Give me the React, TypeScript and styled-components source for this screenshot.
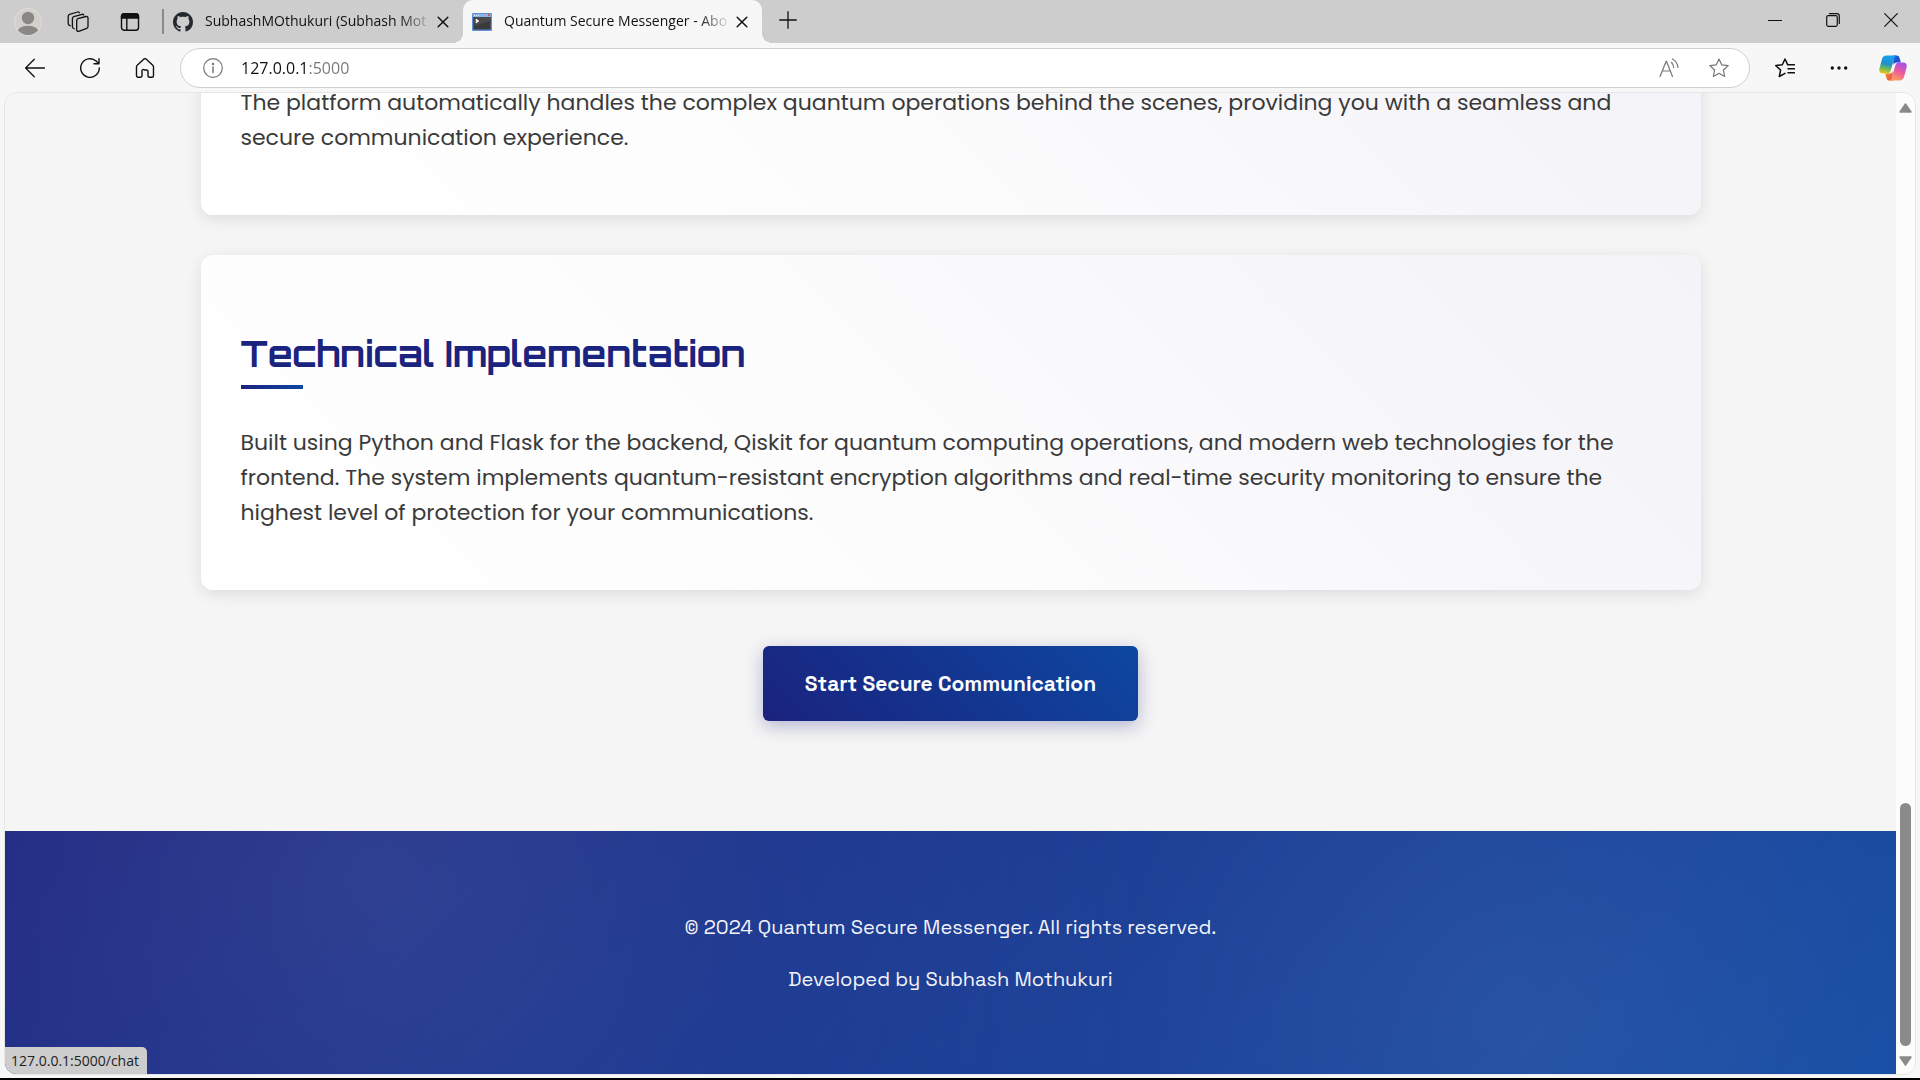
import React from "react";
import styled, { createGlobalStyle, css } from "styled-components";

const uiFont = css`font-family: "Segoe UI", "Open Sans", "Noto Sans", sans-serif;`;
const bodyFont = `"Poppins", "Inter", "Open Sans", sans-serif`;
const headFont = `"Orbitron", "DejaVu Sans", sans-serif`;
const labelFont = `"Space Grotesk", "Inter", "Open Sans", sans-serif`;

const GlobalStyle = createGlobalStyle`
  *, *::before, *::after { box-sizing: border-box; }
  body { margin: 0; background: #f7f7f7; }
  button, input { font: inherit; color: inherit; border: 0; background: none; padding: 0; margin: 0; }
  a { color: inherit; text-decoration: none; }
  svg { display: block; }
`;

const Window = styled.div`
  height: 100vh;
  display: flex;
  flex-direction: column;
  background: #f7f7f7;
  border-bottom: 2px solid #000;
  overflow: hidden;
  ${uiFont}
`;

const TabStrip = styled.header`
  flex: none;
  height: 43px;
  display: flex;
  align-items: stretch;
  background: #cdcdcd;
  color: #111;
`;

const StripTools = styled.div`
  display: flex;
  align-items: center;
  padding: 0 4px 0 2px;
`;

const IconButton = styled.button<{ $w: number; $tone?: string }>`
  flex: none;
  width: ${(p) => p.$w}px;
  height: 40px;
  display: flex;
  align-items: center;
  justify-content: center;
  color: ${(p) => p.$tone ?? "#111"};
`;

const Divider = styled.span`
  align-self: center;
  width: 2px;
  height: 25px;
  background: #8a8a8a;
`;

const Tab = styled.div<{ $active?: boolean }>`
  position: relative;
  width: 299px;
  display: flex;
  align-items: center;
  padding: 0 9px;
  border-radius: 10px 10px 0 0;
  background: ${(p) => (p.$active ? "#f7f7f7" : "transparent")};
  ${(p) =>
    p.$active &&
    css`
      &::before,
      &::after {
        content: "";
        position: absolute;
        bottom: 0;
        width: 10px;
        height: 10px;
      }
      &::before {
        right: 100%;
        background: radial-gradient(circle at 0 0, transparent 10px, #f7f7f7 10px);
      }
      &::after {
        left: 100%;
        background: radial-gradient(circle at 100% 0, transparent 10px, #f7f7f7 10px);
      }
    `}
`;

const TabLabel = styled.button`
  flex: 1;
  min-width: 0;
  height: 34px;
  display: flex;
  align-items: center;
  gap: 12px;
  text-align: left;
  font-size: 14px;
  line-height: 20px;
`;

const TabText = styled.span`
  flex: 1;
  min-width: 0;
  padding-bottom: 2px;
  overflow: hidden;
  white-space: nowrap;
  mask-image: linear-gradient(to left, transparent 0, #000 32px);
`;

const WindowButtons = styled.div`
  margin-left: auto;
  display: flex;
`;

const Toolbar = styled.nav`
  flex: none;
  height: 49px;
  display: flex;
  align-items: center;
  padding-left: 7px;
`;

const AddressBar = styled.form`
  flex: 1;
  min-width: 0;
  height: 40px;
  margin: 0 8px;
  padding: 0 5px 0 12px;
  display: flex;
  align-items: center;
  border: 1px solid #cfcfcf;
  border-radius: 20px;
  background: #fff;
`;

const AddressInput = styled.input`
  flex: 1;
  min-width: 0;
  margin-left: 8px;
  height: 30px;
  font-size: 16px;
  outline: none;
  color: transparent;
  background: linear-gradient(to right, #111 68px, #767676 68px);
  background-clip: text;
`;

const Viewport = styled.div`
  position: relative;
  flex: 1;
  min-height: 0;
  margin: 0 4px 3px;
  display: flex;
  border: 1px solid #e6e6e6;
  border-radius: 13px;
  overflow: hidden;
  background: #f5f5f5;
`;

const Page = styled.div`
  flex: 1;
  min-width: 0;
  display: flex;
  flex-direction: column;
  justify-content: flex-end;
  overflow: hidden;
`;

const Main = styled.main`
  flex: none;
  width: calc(100% - 60px);
  max-width: 1500px;
  margin: 0 auto;
  padding-bottom: 110px;
  display: flex;
  flex-direction: column;
  align-items: center;
`;

const Card = styled.section`
  width: 100%;
  padding: 40px;
  margin-bottom: 40px;
  border-radius: 12px;
  background: linear-gradient(45deg, #fff 0%, #fcfcfd 45%, #f6f6fa 80%, #f3f3f8 100%);
  box-shadow: 0 4px 15px rgba(0, 0, 0, 0.1);
`;

const Title = styled.h2`
  margin: 35px 0 36px;
  font-family: ${headFont};
  font-size: 36px;
  line-height: 48px;
  font-weight: 700;
  color: #1a237e;
  &::after {
    content: "";
    display: block;
    width: 62px;
    height: 4px;
    margin-top: 7px;
    background: linear-gradient(45deg, #1a237e, #0d47a1);
  }
`;

const Paragraph = styled.p`
  margin: 0 0 20px;
  font-family: ${bodyFont};
  font-size: 22px;
  line-height: 35px;
  color: #3a3a3a;
`;

const StartLink = styled.a`
  margin-top: 16px;
  padding: 20px 42px;
  border-radius: 6px;
  font-family: ${labelFont};
  font-size: 21px;
  line-height: 35px;
  font-weight: 600;
  color: #fff;
  background: linear-gradient(45deg, #1a237e, #0d47a1);
  box-shadow: 0 5px 18px rgba(26, 35, 126, 0.3);
`;

const Footer = styled.footer`
  flex: none;
  padding: 79px 40px 78px;
  display: flex;
  flex-direction: column;
  gap: 18px;
  text-align: center;
  font-family: ${labelFont};
  font-size: 20px;
  line-height: 34px;
  color: #f3f4fa;
  background:
    radial-gradient(circle at 20% 20%, rgba(255, 255, 255, 0.1), transparent 50%),
    radial-gradient(circle at 80% 80%, rgba(255, 255, 255, 0.1), transparent 50%),
    linear-gradient(135deg, #1a237e, #0d47a1);
  p { margin: 0; }
`;

const ScrollTrack = styled.div`
  flex: none;
  width: 19px;
  padding: 10px 0 8px;
  display: flex;
  flex-direction: column;
  align-items: center;
  justify-content: space-between;
  background: #fcfcfc;
`;

const ScrollEnd = styled.div`
  display: flex;
  flex-direction: column;
  align-items: center;
  gap: 10px;
`;

const Thumb = styled.div`
  width: 11px;
  height: 243px;
  border-radius: 6px;
  background: #8a8a8a;
`;

const StatusBubble = styled.div`
  position: absolute;
  left: 0;
  bottom: 0;
  padding: 4px 8px 3px 6px;
  border-top-right-radius: 5px;
  font-size: 14px;
  line-height: 20px;
  background: #cdcdcd;
  color: #222;
`;

type IconProps = { size?: number; sw?: number; children: React.ReactNode; box?: number };
const Icon = ({ size = 20, box = 20, sw = 1.2, children }: IconProps) => (
  <svg width={size} height={size} viewBox={`0 0 ${box} ${box}`} fill="none" stroke="currentColor" strokeWidth={sw} strokeLinecap="round" strokeLinejoin="round" aria-hidden="true">
    {children}
  </svg>
);

const Close = () => <Icon size={12} box={12} sw={1.5}><path d="M1.2 1.2l9.6 9.6M10.8 1.2l-9.6 9.6" /></Icon>;

const Avatar = () => (
  <svg width="28" height="28" viewBox="0 0 28 28" aria-hidden="true">
    <circle cx="14" cy="14" r="13.3" fill="#d2d0cd" stroke="#dedbd5" strokeWidth="1.2" />
    <circle cx="14" cy="10" r="6.2" fill="#8b8784" />
    <path d="M3.8 22.2C6 19 9.6 17.8 14 17.8s8 1.200 10.200 4.400A13 13 0 0 1 14 27 13 13 0 0 1 3.800 22.200z" fill="#8b8784" />
  </svg>
);

const Workspaces = () => (
  <Icon size={22} box={22} sw={1.3}>
    <path d="M10.700 7.700l8.400-2.200a1.500 1.500 0 0 1 1.900 1.500v8.400a2 2 0 0 1-1.300 1.900l-8 3a1.500 1.500 0 0 1-2-1.400v-9.300a2 2 0 0 1 1-1.900z" />
    <path d="M7.200 17.700l-.9-.5a2 2 0 0 1-.9-1.700V7.600a2 2 0 0 1 1.400-1.900l8.300-2.400a1.500 1.500 0 0 1 1.700.7" />
    <path d="M3.200 14.800l-1.100-.7a2 2 0 0 1-.9-1.700V5.200a2 2 0 0 1 1.400-1.900L10.600 1a1.500 1.500 0 0 1 1.700.7" />
  </Icon>
);

const TabActions = () => (
  <Icon size={20} sw={1.4}>
    <rect x="1.500" y="1.700" width="17" height="16.600" rx="2.800" />
    <path d="M1.500 6V4.500a2.800 2.800 0 0 1 2.800-2.800h11.400a2.800 2.800 0 0 1 2.800 2.800V6z" fill="currentColor" />
    <path d="M6.800 6v12" />
  </Icon>
);

const GitHub = () => (
  <svg width="20" height="20" viewBox="0 0 16 16" fill="#24292f" aria-hidden="true">
    <path d="M8 0C3.580 0 0 3.580 0 8c0 3.540 2.290 6.530 5.470 7.590.4.070.55-.17.55-.38 0-.19-.01-.82-.01-1.490-2.010.37-2.530-.49-2.690-.94-.09-.23-.48-.94-.82-1.130-.28-.15-.68-.52-.01-.53.63-.01 1.080.58 1.230.82.72 1.210 1.870.87 2.330.66.07-.52.28-.87.51-1.070-1.780-.2-3.640-.89-3.640-3.950 0-.87.31-1.590.82-2.150-.08-.2-.36-1.020.08-2.120 0 0 .67-.21 2.200.82.64-.18 1.320-.27 2-.27s1.360.09 2 .27c1.530-1.040 2.200-.82 2.200-.82.44 1.100.16 1.920.08 2.120.51.56.82 1.270.82 2.150 0 3.070-1.870 3.750-3.650 3.950.29.25.54.73.54 1.480 0 1.070-.01 1.930-.01 2.200 0 .21.15.46.55.38A8.010 8.010 0 0 0 16 8c0-4.420-3.580-8-8-8z" />
  </svg>
);

const TerminalIcon = () => (
  <svg width="20" height="18" viewBox="0 0 20 18" aria-hidden="true">
    <rect width="20" height="18" rx="1" fill="#5f8fd6" />
    <rect x="1" y="1" width="18" height="3" fill="#8db4ea" />
    <path d="M2 2.500h1m1 0h1m1 0h1" stroke="#dce9fb" strokeWidth="1" />
    <rect x="16" y="1" width="2" height="2" fill="#e0564c" />
    <rect x="1.300" y="4" width="17.400" height="12.500" fill="#3b3b3b" />
    <path d="M1.300 4h17.400v4L1.300 13z" fill="#4a4a4a" />
    <path d="M3.800 6.300l2.200 1.700-2.200 1.700" stroke="#fff" strokeWidth="1.600" fill="none" />
  </svg>
);

const Copilot = () => (
  <svg width="28" height="26" viewBox="0 0 28 26" aria-hidden="true">
    <defs>
      <linearGradient id="cpBlue" x1="0.4" y1="0" x2="0.200" y2="1">
        <stop offset="0" stopColor="#18a0ee" />
        <stop offset="0.45" stopColor="#1f8fc9" />
        <stop offset="0.700" stopColor="#6cb95a" />
        <stop offset="1" stopColor="#f4cb12" />
      </linearGradient>
      <linearGradient id="cpPink" x1="0.700" y1="0" x2="0.300" y2="1">
        <stop offset="0" stopColor="#a44ff0" />
        <stop offset="0.500" stopColor="#ee5a9a" />
        <stop offset="1" stopColor="#ffa35c" />
      </linearGradient>
      <linearGradient id="cpNavy" x1="0" y1="0" x2="1" y2="1">
        <stop offset="0" stopColor="#1a5fe0" />
        <stop offset="1" stopColor="#2444c4" />
      </linearGradient>
      <linearGradient id="cpRed" x1="0" y1="0" x2="1" y2="1">
        <stop offset="0" stopColor="#f79a2b" />
        <stop offset="1" stopColor="#e8424e" />
      </linearGradient>
    </defs>
    <path d="M14 0.500h3.500c1.500 0 2.600.9 3 2.300l1.300 4.700h-4c-1.700 0-2.800 1-3.300 2.600z" fill="url(#cpNavy)" />
    <path d="M14 25.500h-3.500c-1.500 0-2.600-.9-3-2.300l-1.300-4.700h4c1.700 0 2.800-1 3.300-2.600z" fill="url(#cpRed)" />
    <path d="M7.500.5H18c-1.500.3-2.300 1.400-2.800 3l-3.600 12.300c-.5 1.700-1.700 2.700-3.400 2.700H3.500C.9 18.500-.2 16.300.4 13.800L3 4C3.600 1.800 5.300.5 7.500.5z" fill="url(#cpBlue)" />
    <path d="M20.500 25.500H10c1.500-.3 2.300-1.400 2.800-3l3.600-12.300c.5-1.700 1.700-2.700 3.400-2.700h4.700c2.600 0 3.700 2.200 3.100 4.700L25 22c-.6 2.200-2.300 3.500-4.500 3.500z" fill="url(#cpPink)" />
  </svg>
);

const Arrow = ({ down }: { down?: boolean }) => (
  <svg width="13" height="10" viewBox="0 0 13 10" fill="#8a8a8a" stroke="#8a8a8a" strokeWidth="1.500" strokeLinejoin="round" aria-hidden="true">
    <path d={down ? "M1 1h11L6.500 9z" : "M1 9h11L6.500 1z"} />
  </svg>
);

export default function App() {
  return (
    <Window>
      <GlobalStyle />
      <TabStrip>
        <StripTools>
          <IconButton $w={52} aria-label="Profile"><Avatar /></IconButton>
          <IconButton $w={48} aria-label="Workspaces"><Workspaces /></IconButton>
          <IconButton $w={56} aria-label="Tab actions menu"><TabActions /></IconButton>
        </StripTools>
        <Divider />
        <Tab>
          <TabLabel><GitHub /><TabText>SubhashMOthukuri (Subhash Mot</TabText></TabLabel>
          <IconButton $w={22} aria-label="Close tab"><Close /></IconButton>
        </Tab>
        <Tab $active>
          <TabLabel><TerminalIcon /><TabText>Quantum Secure Messenger - Abo</TabText></TabLabel>
          <IconButton $w={22} aria-label="Close tab"><Close /></IconButton>
        </Tab>
        <IconButton $w={52} aria-label="New tab"><Icon size={18} box={18} sw={1.3}><path d="M9 .7v16.600M.7 9h16.600" /></Icon></IconButton>
        <WindowButtons>
          <IconButton $w={58} aria-label="Minimize"><Icon size={14} box={14}><path d="M.5 7.500h13" /></Icon></IconButton>
          <IconButton $w={58} aria-label="Restore"><Icon size={14} box={14}><rect x=".7" y="2.700" width="10.600" height="10.600" rx="1.500" /><path d="M3.500.7H11A2.300 2.300 0 0 1 13.300 3v7.500" /></Icon></IconButton>
          <IconButton $w={58} aria-label="Close"><Icon size={14} box={14}><path d="M.7.700l12.600 12.600M13.300.7L.7 13.300" /></Icon></IconButton>
        </WindowButtons>
      </TabStrip>

      <Toolbar>
        <IconButton $w={55} aria-label="Back"><Icon sw={1.3}><path d="M.6 10h19M9.300 1.300L.6 10l8.700 8.700" /></Icon></IconButton>
        <IconButton $w={55} aria-label="Refresh"><Icon sw={1.400}><path d="M19.300 10a9.300 9.300 0 1 1-3.200-7l2.600 2.500M19 .8v5h-5" /></Icon></IconButton>
        <IconButton $w={55} aria-label="Home"><Icon sw={1.400}><path d="M1.500 8.700a2 2 0 0 1 .7-1.500l6.500-6a2 2 0 0 1 2.600 0l6.500 6a2 2 0 0 1 .7 1.500v9a1.500 1.500 0 0 1-1.500 1.500h-2.500a1.500 1.500 0 0 1-1.500-1.500v-4.200a1.500 1.500 0 0 0-1.500-1.500h-2A1.500 1.500 0 0 0 7 13.500v4.200a1.500 1.500 0 0 1-1.500 1.500H3a1.500 1.500 0 0 1-1.500-1.500z" /></Icon></IconButton>
        <AddressBar onSubmit={(e) => e.preventDefault()}>
          <IconButton $w={40} $tone="#767676" type="button" aria-label="Site information"><Icon sw={1.200}><circle cx="10" cy="10" r="9.300" /><path d="M10 9v5.500" strokeWidth="1.500" /><circle cx="10" cy="6" r=".6" fill="currentColor" /></Icon></IconButton>
          <AddressInput aria-label="Address" defaultValue="127.0.0.1:5000" />
          <IconButton $w={50} $tone="#767676" type="button" aria-label="Read aloud"><Icon><path d="M1 18.500L7.300 3l6.200 15.500M3.300 13h8M12.500 4.500c1.400 1.300 2.100 2.900 2.200 5M13.500 1c3.300 1.900 5.100 4.800 5.400 8.500" /></Icon></IconButton>
          <IconButton $w={50} $tone="#767676" type="button" aria-label="Add to favorites"><Icon><path d="M10 1l2.700 5.800 6.500.8-4.800 4.400 1.300 6.500L10 15.300l-5.700 3.200L5.600 12 .8 7.600l6.500-.8z" /></Icon></IconButton>
        </AddressBar>
        <IconButton $w={54} aria-label="Favorites"><Icon sw={1.500}><path d="M12.800 6.800L10 1 7.300 6.800l-6.500.8L5.600 12l-1.300 6.500L10 15.300M12.500 6.800h7M13 10.800h6.500M13 14.800h6.500" /></Icon></IconButton>
        <IconButton $w={54} aria-label="Settings and more"><Icon><g fill="currentColor" stroke="none"><circle cx="3.300" cy="10" r="1.700" /><circle cx="10" cy="10" r="1.700" /><circle cx="16.700" cy="10" r="1.700" /></g></Icon></IconButton>
        <IconButton $w={54} aria-label="Copilot"><Copilot /></IconButton>
      </Toolbar>

      <Viewport>
        <Page>
          <Main>
            <Card>
              <Paragraph>
                The platform automatically handles the complex quantum operations behind the scenes, providing you with a seamless and secure communication experience.
              </Paragraph>
            </Card>
            <Card>
              <Title>Technical Implementation</Title>
              <Paragraph>
                Built using Python and Flask for the backend, Qiskit for quantum computing operations, and modern web technologies for the frontend. The system implements quantum-resistant encryption algorithms and real-time security monitoring to ensure the highest level of protection for your communications.
              </Paragraph>
            </Card>
            <StartLink href="#chat">Start Secure Communication</StartLink>
          </Main>
          <Footer>
            <p>© 2024 Quantum Secure Messenger. All rights reserved.</p>
            <p>Developed by Subhash Mothukuri</p>
          </Footer>
        </Page>
        <ScrollTrack>
          <Arrow />
          <ScrollEnd>
            <Thumb />
            <Arrow down />
          </ScrollEnd>
        </ScrollTrack>
        <StatusBubble>127.0.0.1:5000/chat</StatusBubble>
      </Viewport>
    </Window>
  );
}
